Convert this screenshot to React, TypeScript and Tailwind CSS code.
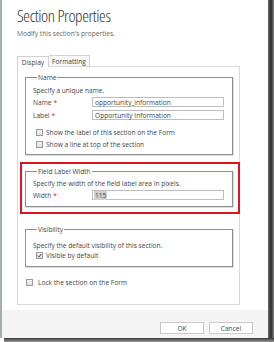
import { useState } from "react";

function Box({ checked = false }: { checked?: boolean }) {
  return (
    <span className="w-[7px] h-[7px] border border-[#9a9a9a] bg-gradient-to-b from-[#f4f4f4] to-[#dedede] flex items-center justify-center shrink-0">
      {checked && (
        <svg viewBox="0 0 8 8" className="w-[7px] h-[7px]">
          <path d="M1.2 4.2 L3.2 6.2 L6.8 1.6" fill="none" stroke="#333" strokeWidth="1.5" />
        </svg>
      )}
    </span>
  );
}

function Req() {
  return <span className="text-[#e0141e] ml-[2px]">*</span>;
}

export default function App() {
  const [name] = useState("opportunity_information");
  const [label] = useState("Opportunity Information");

  return (
    <div className="w-[274px] h-[342px] bg-white flex flex-col text-[6.6px] leading-[9px] text-[#444]" style={{ fontFamily: '"Open Sans", "Liberation Sans", sans-serif' }}>
      <div className="flex flex-1 min-h-0">
        <div className="w-[2px] bg-[#a7aeae]" />
        <div className="flex-1 flex flex-col">
          <div className="pl-[15px] pr-[28px] flex-1 flex flex-col">
            <h1 className="mt-[6px] text-[17px] leading-[20px] font-light font-stretch-[75%] tracking-[-0.4px] text-[#333]">Section Properties</h1>
            <p className="mt-[3px] text-[#666]">Modify this section's properties.</p>

            <div className="mt-[17px] flex items-end h-[11px]">
              <div className="w-[32px] h-[11px] border border-b-0 border-[#d2d2d2] bg-white flex items-center justify-center relative top-[1px]">Display</div>
              <div className="w-[41px] h-[11px] border border-b-0 border-l-0 border-[#d2d2d2] bg-[#f7f7f7] flex items-center justify-center">Formatting</div>
            </div>

            <div className="h-[239px] border border-[#d9d9d9] pt-[6px] pl-[7px] pr-[6px] flex flex-col">
              <fieldset className="border border-[#8f8f8f] shadow-[1px_1px_0_#dcdcdc] pl-[7px] pr-[8px] pb-[5px]">
                <legend className="ml-[4px] px-[1px] leading-[9px]">Name</legend>
                <div className="mt-[3px] h-[10px] flex items-center">Specify a unique name.</div>
                <div className="mt-[2px] flex items-center h-[10px]">
                  <span className="w-[59px]">Name<Req /></span>
                  <div className="flex-1 h-[10px] border border-[#bdbdbd] px-[2px] flex items-center">{name}</div>
                </div>
                <div className="mt-[3px] flex items-center h-[10px]">
                  <span className="w-[59px]">Label<Req /></span>
                  <div className="flex-1 h-[10px] border border-[#bdbdbd] px-[2px] flex items-center">{label}</div>
                </div>
                <div className="mt-[7px] ml-[3px] flex items-center gap-[3px] h-[10px]">
                  <Box />
                  <span>Show the label of this section on the Form</span>
                </div>
                <div className="mt-[2px] ml-[3px] flex items-center gap-[3px] h-[10px]">
                  <Box />
                  <span>Show a line at top of the section</span>
                </div>
              </fieldset>

              <div className="mt-[7px] -ml-[5px] -mr-[7px] border-2 border-[#e0141e] pl-[3px] pr-[5px] pt-[3px] pb-[5px]">
                <fieldset className="border border-[#8f8f8f] shadow-[1px_1px_0_#dcdcdc] pl-[7px] pr-[8px] pb-[6px]">
                  <legend className="ml-[4px] px-[1px] leading-[9px]">Field Label Width</legend>
                  <div className="mt-[2px] h-[10px] flex items-center">Specify the width of the field label area in pixels.</div>
                  <div className="mt-[2px] flex items-center h-[10px]">
                    <span className="w-[59px]">Width<Req /></span>
                    <div className="flex-1 h-[10px] border border-[#bdbdbd] px-[1px] flex items-center">
                      <span className="bg-[#cdd1d6] px-[1px]">115</span>
                    </div>
                  </div>
                </fieldset>
              </div>

              <fieldset className="mt-[11px] border border-[#8f8f8f] shadow-[1px_1px_0_#dcdcdc] pl-[7px] pr-[8px] pb-[6px]">
                <legend className="ml-[4px] px-[1px] leading-[9px]">Visibility</legend>
                <div className="mt-[6px] h-[10px] flex items-center">Specify the default visibility of this section.</div>
                <div className="ml-[3px] flex items-center gap-[3px] h-[10px]">
                  <Box checked />
                  <span>Visible by default</span>
                </div>
              </fieldset>

              <div className="mt-[10px] ml-[1px] flex items-center gap-[5px] h-[10px]">
                <Box />
                <span>Lock the section on the Form</span>
              </div>
            </div>
          </div>

          <div className="h-[28px] bg-[#f4f4f4] flex items-center justify-end gap-[5px] pr-[15px] pt-[8px]">
            <button className="w-[44px] h-[12px] border border-[#cacaca] bg-white leading-[9px] text-[#444]">OK</button>
            <button className="w-[44px] h-[12px] border border-[#cacaca] bg-white leading-[9px] text-[#444]">Cancel</button>
          </div>
        </div>
        <div className="w-[6px] bg-gradient-to-r from-[#6a6a6a] via-[#2b2b2b] to-[#8a8a8a]" />
      </div>
      <div className="h-[4px] bg-gradient-to-b from-[#3a3a3a] to-[#9a9a9a] ml-[4px]" />
    </div>
  );
}
